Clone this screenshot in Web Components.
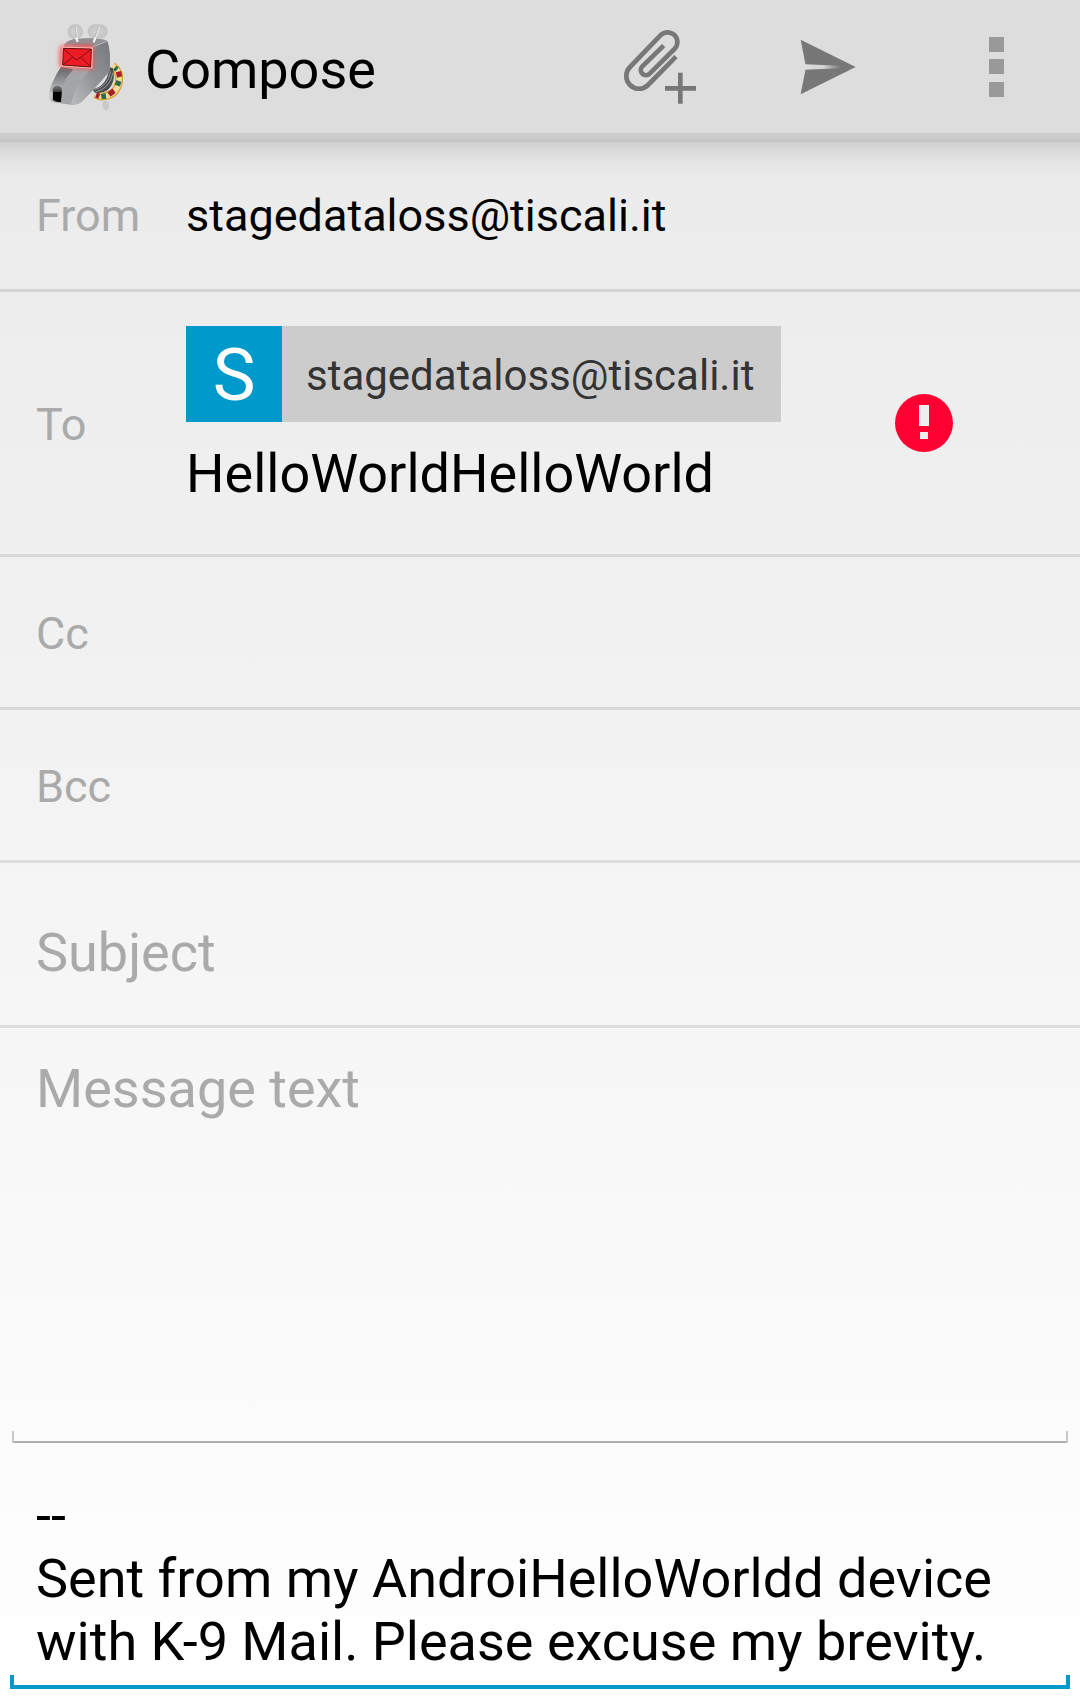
<!DOCTYPE html>
<html lang="en">
<head>
<meta charset="utf-8">
<meta name="viewport" content="width=device-width, initial-scale=1">
<title>Compose</title>
<style>
  html, body { margin: 0; }
  body {
    font-family: Roboto, "Liberation Sans", sans-serif;
    color: #000;
    background: linear-gradient(#e9e9e9, #fff) no-repeat #fff;
  }
</style>
</head>
<body>
<compose-screen>
  <app-bar slot="bar">
    <k9-logo slot="logo"></k9-logo>
    Compose
    <bar-action slot="actions" icon="attach" label="Add attachment"></bar-action>
    <bar-action slot="actions" icon="send" label="Send"></bar-action>
    <bar-action slot="actions" icon="more" label="More options"></bar-action>
  </app-bar>
  <identity-row label="From">stagedataloss@tiscali.it</identity-row>
  <recipient-row label="To" value="HelloWorldHelloWorld" invalid>
    <address-chip initial="S">stagedataloss@tiscali.it</address-chip>
  </recipient-row>
  <recipient-row label="Cc"></recipient-row>
  <recipient-row label="Bcc"></recipient-row>
  <subject-row label="Subject"></subject-row>
  <text-editor class="message" label="Message text" placeholder="Message text"></text-editor>
  <text-editor class="signature" label="Signature" active rows="3">--
Sent from my AndroiHelloWorldd device with K-9 Mail. Please excuse my brevity.</text-editor>
</compose-screen>

<script>
const reset = `
  *, *::before, *::after { box-sizing: border-box; }
  button, input, textarea {
    font: inherit; color: inherit; margin: 0; padding: 0; border: 0;
    border-radius: 0; background: none; outline: 0; text-align: left;
  }
`;
const rowStyle = `
  :host {
    display: flex; align-items: center;
    border-bottom: 3px solid rgba(0, 0, 0, .1);
    padding: 50px 36px 47px;
    font-size: 45px; line-height: 53px;
  }
  label { flex: none; width: 150px; color: #aaa; }
`;

class BaseElement extends HTMLElement {
  connectedCallback() {
    if (this.shadowRoot) return;
    this.attachShadow({ mode: "open" }).innerHTML = `<style>${reset}</style>` + this.render();
    this.ready();
  }
  attr(name) { return this.getAttribute(name) || ""; }
  ready() {}
}

customElements.define("compose-screen", class extends BaseElement {
  render() {
    return `
      <style>
        :host { display: flex; flex-direction: column; min-height: 100vh; padding-bottom: 10px; box-sizing: border-box; }
        main { flex: 1; display: flex; flex-direction: column; }
        ::slotted(.message) { flex: 1; --pad-top: 29px; margin: 0 12px; --pad-side: 24px; }
        ::slotted(.signature) { --pad-top: 41px; --pad-bottom: 16px; margin: 0 10px; --pad-side: 26px; }
      </style>
      <slot name="bar"></slot>
      <main><slot></slot></main>`;
  }
});

customElements.define("app-bar", class extends BaseElement {
  render() {
    return `
      <style>
        :host { display: block; position: relative; background: #ddd; border-bottom: 6px solid #ccc; }
        :host::after {
          content: ""; position: absolute; left: 0; right: 0; top: calc(100% + 6px); height: 42px;
          pointer-events: none;
          background: linear-gradient(rgba(0,0,0,.16) 3px, rgba(0,0,0,.115) 3px, rgba(0,0,0,.05) 16px, rgba(0,0,0,.015) 28px, transparent);
        }
        header { display: flex; align-items: center; height: 133px; padding-left: 30px; }
        h1 { flex: 1; margin: 0; padding: 6px 0 0 5px; font-size: 54px; line-height: 63px; font-weight: 400; }
        nav { display: flex; }
      </style>
      <header>
        <slot name="logo"></slot>
        <h1><slot></slot></h1>
        <nav><slot name="actions"></slot></nav>
      </header>`;
  }
});

const icons = {
  attach: `<svg viewBox="0 0 360 339" width="120" height="113" fill="none" stroke="#777" stroke-width="14">
      <path d="M228 140 144 225A38 38 0 0 1 90 171L182 75.500A29 29 0 0 1 223.500 117L149 191A15 15 0 0 1 127 169L191 107"/>
      <path d="M195 235H288M241 188V281"/></svg>`,
  send: `<svg viewBox="0 0 288 339" width="96" height="113">
      <defs><linearGradient id="fade" x1="78" x2="182" y1="0" y2="0" gradientUnits="userSpaceOnUse">
        <stop offset="0" stop-color="#ddd"/><stop offset=".5" stop-color="#d4d4d4"/><stop offset="1" stop-color="#777"/></linearGradient></defs>
      <path fill="#777" d="M62 89 227 171 62 253 78 171Z"/>
      <path fill="url(#fade)" d="M74 163 182 167V175L74 179Z"/></svg>`,
  more: `<svg viewBox="576 0 144 339" width="48" height="113" fill="#999">
      <path d="M627 81h45v45h-45zM627 147h45v45h-45zM627 216h45v45h-45z"/></svg>`
};

customElements.define("bar-action", class extends BaseElement {
  render() {
    return `
      <style>
        :host { display: block; }
        button { display: flex; justify-content: center; width: 168px; cursor: pointer; }
        svg { display: block; }
      </style>
      <button type="button" aria-label="${this.attr("label")}">${icons[this.attr("icon")]}</button>`;
  }
});

customElements.define("k9-logo", class extends BaseElement {
  render() {
    return `
      <style>:host { display: block; } svg { display: block; }</style>
      <svg viewBox="0 0 330 339" width="110" height="113" aria-hidden="true">
        <defs>
          <linearGradient id="head" x1="0" y1="0" x2="1" y2="1">
            <stop offset="0" stop-color="#777"/><stop offset=".45" stop-color="#b5b5b7"/><stop offset="1" stop-color="#737477"/></linearGradient>
          <linearGradient id="side" x1="1" y1="0" x2="0" y2="1">
            <stop offset="0" stop-color="#77787b"/><stop offset=".5" stop-color="#929396"/><stop offset="1" stop-color="#bcbdbf"/></linearGradient>
          <linearGradient id="snout" x1="0" y1="0" x2="0" y2="1">
            <stop offset="0" stop-color="#646568"/><stop offset="1" stop-color="#aaabad"/></linearGradient>
          <linearGradient id="nose" x1="0" y1="0" x2="0" y2="1">
            <stop offset="0" stop-color="#777"/><stop offset=".35" stop-color="#444"/><stop offset=".4" stop-color="#000"/></linearGradient>
          <radialGradient id="ear"><stop offset="0" stop-color="#d2d2d2"/><stop offset="1" stop-color="#c3c3c3"/></radialGradient>
          <filter id="glow" x="-40%" y="-40%" width="180%" height="180%"><feGaussianBlur stdDeviation="8"/></filter>
        </defs>
        <ellipse cx="227" cy="286" rx="10" ry="14" fill="#c9c9c9"/>
        <path d="M248 168C280 192 270 246 234 256Q214 264 196 253" fill="none" stroke="#d99c24" stroke-width="24"/>
        <path d="M248 168C280 192 270 246 234 256Q214 264 196 253" fill="none" stroke="#f6dc9c" stroke-width="17"/>
        <g fill="none" stroke-width="16">
          <path d="M265 185 269 201M252 242 237 254M208 259 198 255" stroke="#a3212a"/>
          <path d="M254 173 261 179M267 213 262 227M228 258 214 260" stroke="#2c6b4c"/>
        </g>
        <path d="M188 238Q232 230 238 172L248 174Q260 215 232 241Q215 252 194 248Z" fill="#4c4d50"/>
        <path d="M194 239Q234 229 242 184M196 246Q240 236 249 188" fill="none" stroke="#9a9b9e" stroke-width="3"/>
        <path d="M103 105Q112 87 149 86Q210 82 232 93Q243 125 239 183Q218 208 191 238L155 275Q140 287 112 283L70 277Q57 272 59 255Q58 237 65 222L94 168Z" fill="url(#head)"/>
        <path d="M232 93Q243 125 239 183Q218 208 191 238L155 275Q140 287 120 283L138 231 186 170 189 112Z" fill="url(#side)"/>
        <path d="M103 105Q112 87 149 86Q210 82 232 93L188 111Z" fill="#909194"/>
        <path d="M93 172Q73 199 65 228Q84 218 96 233Q111 202 130 178Z" fill="url(#snout)"/>
        <path d="M188 111 232 93M103 105 188 111" fill="none" stroke="#c7c7c9" stroke-width="2"/>
        <path d="M96 233Q105 202 133 177L185 172Q150 207 138 231L123 282 93 280Z" fill="#a4a5a7"/>
        <path d="M68 240Q70 226 83 227Q96 229 96 241L93 276Q79 278 68 269Z" fill="url(#nose)"/>
        <path d="M59 248 68 243V270L60 265Z" fill="#c7c7c9"/>
        <path d="M91 108 188 106 190 176 89 170Z" fill="#ff4545" filter="url(#glow)"/>
        <path d="M98 112 187 115 185 173 96 167Z" fill="#ed1c24" stroke="#ffb3ad" stroke-width="5"/>
        <path d="M100 115 184 117 182 171 98 165Z" fill="#ed1c24" stroke="#611" stroke-width="3"/>
        <path d="M101 116Q121 136 139 150Q160 138 183 118M99 164 128 142M181 169 154 143" fill="none" stroke="#711" stroke-width="3"/>
        <ellipse cx="136" cy="65" rx="23" ry="23" fill="url(#ear)"/>
        <rect x="173" y="43" width="60" height="43" rx="21" fill="url(#ear)"/>
        <path d="M137 48 143 94M208 49 192 96" stroke="#efefef" stroke-width="4"/>
        <path d="M135 48 141 90M206 49 190 94" stroke="#a3a3a3" stroke-width="2"/>
        <path d="M138 83 143 96M196 83 191 97" stroke="#f8f8f8" stroke-width="6"/>
      </svg>`;
  }
});

customElements.define("identity-row", class extends BaseElement {
  render() {
    return `
      <style>${rowStyle} button { flex: 1; }</style>
      <label for="field">${this.attr("label")}</label>
      <button id="field" type="button"><slot></slot></button>`;
  }
});

customElements.define("recipient-row", class extends BaseElement {
  render() {
    const label = `<label for="field">${this.attr("label")}</label>`;
    if (!this.hasAttribute("invalid")) {
      return `
        <style>${rowStyle} input { flex: 1; min-width: 0; height: 53px; font-size: 54px; }</style>
        ${label}<input id="field" type="text">`;
    }
    return `
      <style>
        ${rowStyle}
        :host { padding-top: 34px; padding-bottom: 49px; padding-right: 127px; }
        label { padding-top: 18px; }
        .entries { flex: 1; min-width: 0; display: flex; flex-direction: column; align-items: flex-start; gap: 20px; }
        input { width: 100%; height: 63px; font-size: 54px; line-height: 63px; }
        svg { flex: none; display: block; margin-top: 14px; }
      </style>
      ${label}
      <div class="entries"><slot></slot><input id="field" type="text" spellcheck="false" value="${this.attr("value")}"></div>
      <svg viewBox="0 0 58 58" width="58" height="58" role="img" aria-label="Invalid address">
        <circle cx="29" cy="29" r="29" fill="#ff0033"/>
        <path fill="#eee" d="M24 11h10v21H24zM25 38h8v7h-8z"/>
      </svg>`;
  }
});

customElements.define("address-chip", class extends BaseElement {
  render() {
    return `
      <style>
        :host { display: flex; align-items: center; height: 96px; background: #ccc; color: #333; font-size: 42px; line-height: 50px; }
        .badge { width: 96px; height: 96px; background: #0099cc; color: #fff; font-size: 72px; line-height: 100px; text-align: center; }
        .address { padding: 4px 27px 0 24px; white-space: nowrap; }
      </style>
      <span class="badge">${this.attr("initial")}</span>
      <span class="address"><slot></slot></span>`;
  }
});

customElements.define("subject-row", class extends BaseElement {
  render() {
    return `
      <style>
        :host { display: flex; border-bottom: 3px solid rgba(0, 0, 0, .1); padding: 58px 36px 41px; font-size: 54px; line-height: 63px; }
        input { flex: 1; min-width: 0; height: 63px; }
        ::placeholder { color: #aaa; opacity: 1; }
      </style>
      <input type="text" aria-label="${this.attr("label")}" placeholder="${this.attr("label")}">`;
  }
});

customElements.define("text-editor", class extends BaseElement {
  render() {
    return `
      <style>
        :host {
          --line: 2px; --tick: 12px; --bar: #b0b0b0; --side: #c8c8c8;
          display: flex; font-size: 54px; line-height: 63px;
          background:
            linear-gradient(var(--side), var(--side)) left bottom / var(--line) var(--tick) no-repeat,
            linear-gradient(var(--side), var(--side)) right bottom / var(--line) var(--tick) no-repeat,
            linear-gradient(var(--bar), var(--bar)) left bottom / 100% var(--line) no-repeat;
        }
        :host([active]) { --line: 4px; --tick: 14px; --bar: #0099cc; --side: #0099cc; }
        textarea {
          flex: 1; min-width: 0; display: block; resize: none; overflow: hidden;
          padding: var(--pad-top, 0) var(--pad-side, 0) var(--pad-bottom, 0);
        }
        ::placeholder { color: #aaa; opacity: 1; }
      </style>
      <textarea rows="${this.attr("rows") || 1}" spellcheck="false" aria-label="${this.attr("label")}" placeholder="${this.attr("placeholder")}"></textarea>`;
  }
  ready() {
    this.shadowRoot.querySelector("textarea").value = this.textContent.trim();
  }
});
</script>
</body>
</html>
